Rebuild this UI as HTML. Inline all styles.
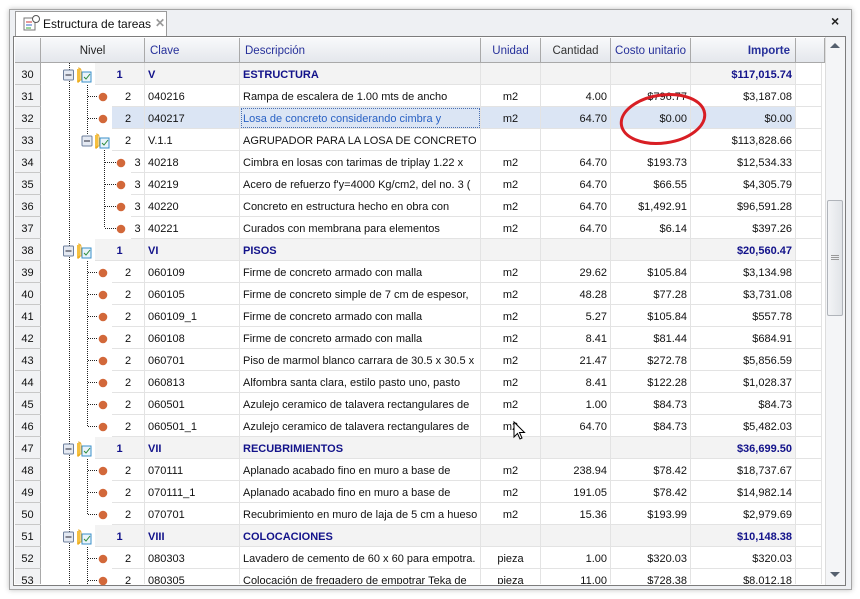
<!DOCTYPE html>
<html><head><meta charset="utf-8"><style>
*{margin:0;padding:0;box-sizing:border-box}
body{width:860px;height:599px;background:#fff;position:relative;overflow:hidden;font-family:"Liberation Sans",Tahoma,sans-serif;font-size:11px;color:#111}
.frame{position:absolute;left:9px;top:9px;width:843px;height:581px;background:#eef0f3;border:1px solid #a5a5a5;box-shadow:0 0 5px rgba(0,0,0,.25)}
.tab{position:absolute;left:15px;top:11px;width:152px;height:26px;background:#fff;border:1px solid #9a9a9a;border-bottom:none;font-size:12px;padding:5px 0 0 27px}
.tabx{position:absolute;left:155px;top:16px;color:#999;font-weight:bold;font-size:12px}
.closex{position:absolute;left:831px;top:13px;font-weight:bold;font-size:14px;color:#222}
.grid{position:absolute;left:13px;top:36px;width:833px;height:550px;background:#fff;border:1px solid #7c7c7c;overflow:hidden}
.hd{position:absolute;top:38px;height:25px;background:linear-gradient(#f8f9fb,#e4e7ec);border-right:1px solid #a9a9a9;border-bottom:1px solid #a9a9a9;color:#26309a;font-size:11.5px;line-height:27px;padding:0 5px;white-space:nowrap;overflow:hidden}
.r{position:absolute;left:15px;width:810px;height:22px}
.r>div{position:absolute;top:0;height:22px;line-height:22px;padding-top:1px;border-right:1px solid #e3e3e3;border-bottom:1px solid #e3e3e3;white-space:nowrap;overflow:hidden;padding-left:3px;padding-right:3px}
.n{left:0;width:26px;background:#f1f2f4;border-right:1px solid #a9a9a9!important;border-bottom:1px solid #c8c8c8!important;text-align:center}
.lv{text-align:center}
.k{left:130px;width:95px}
.d{left:225px;width:241px}
.u{left:466px;width:60px;text-align:center}
.c{left:526px;width:70px;text-align:right}
.p{left:596px;width:80px;text-align:right}
.i{left:676px;width:105px;text-align:right}
.x{left:781px;width:26px}
.g .lv,.g .k,.g .d,.g .u,.g .c,.g .p,.g .i{background:#f3f3f3;color:#12128a;font-weight:bold}
.s .lv,.s .k,.s .d,.s .u,.s .c,.s .p,.s .i{background:#dbe5f4}
.s .d{color:#2a62c4;outline:1px dotted #4a6fb0;outline-offset:-2px}
.l1{left:80px;width:50px}.l2{left:97px;width:33px}.l3{left:116px;width:14px;padding-left:0!important;padding-right:0!important}
.sb{position:absolute;left:825px;top:37px;width:20px;height:548px;background:#f4f5f7;border-left:1px solid #ddd}
.th{position:absolute;left:827px;top:200px;width:16px;height:116px;border:1px solid #b0b4ba;border-radius:2px;background:linear-gradient(90deg,#f3f4f6,#e1e4e8)}
</style></head><body>
<div class="frame"></div>
<div class="tab">Estructura de tareas</div>
<svg style="position:absolute;left:23px;top:14px" width="18" height="18"><rect x="1" y="4" width="11" height="12" fill="#fff" stroke="#777"/><line x1="3" y1="8" x2="9" y2="8" stroke="#c33"/><line x1="3" y1="11" x2="9" y2="11" stroke="#36c"/><line x1="3" y1="14" x2="8" y2="14" stroke="#3a3"/><circle cx="13" cy="5" r="3.5" fill="#fff" stroke="#555"/></svg>
<div class="tabx">✕</div>
<div class="closex">×</div>
<div class="grid"></div>
<div class="hd" style="left:15px;width:26px"></div>
<div class="hd" style="left:41px;width:104px;text-align:center;color:#222">Nivel</div>
<div class="hd" style="left:145px;width:95px">Clave</div>
<div class="hd" style="left:240px;width:241px">Descripción</div>
<div class="hd" style="left:481px;width:60px;text-align:center">Unidad</div>
<div class="hd" style="left:541px;width:70px;text-align:center;color:#333">Cantidad</div>
<div class="hd" style="left:611px;width:80px;text-align:center;padding:0">Costo unitario</div>
<div class="hd" style="left:691px;width:105px;text-align:right;font-weight:bold">Importe</div>
<div class="hd" style="left:796px;width:29px"></div>

<div class="r g" style="top:63px"><div class="n">30</div><div class="lv l1">1</div><div class="k">V</div><div class="d">ESTRUCTURA</div><div class="u"></div><div class="c"></div><div class="p"></div><div class="i">$117,015.74</div><div class="x"></div></div>
<div class="r" style="top:85px"><div class="n">31</div><div class="lv l2">2</div><div class="k">040216</div><div class="d">Rampa de escalera de 1.00 mts de ancho</div><div class="u">m2</div><div class="c">4.00</div><div class="p">$796.77</div><div class="i">$3,187.08</div><div class="x"></div></div>
<div class="r s" style="top:107px"><div class="n">32</div><div class="lv l2">2</div><div class="k">040217</div><div class="d">Losa de concreto considerando cimbra y</div><div class="u">m2</div><div class="c">64.70</div><div class="p">$0.00</div><div class="i">$0.00</div><div class="x"></div></div>
<div class="r" style="top:129px"><div class="n">33</div><div class="lv l2">2</div><div class="k">V.1.1</div><div class="d">AGRUPADOR PARA LA LOSA DE CONCRETO</div><div class="u"></div><div class="c"></div><div class="p"></div><div class="i">$113,828.66</div><div class="x"></div></div>
<div class="r" style="top:151px"><div class="n">34</div><div class="lv l3">3</div><div class="k">40218</div><div class="d">Cimbra en losas con tarimas de triplay 1.22 x</div><div class="u">m2</div><div class="c">64.70</div><div class="p">$193.73</div><div class="i">$12,534.33</div><div class="x"></div></div>
<div class="r" style="top:173px"><div class="n">35</div><div class="lv l3">3</div><div class="k">40219</div><div class="d">Acero de refuerzo f'y=4000 Kg/cm2, del no. 3 (</div><div class="u">m2</div><div class="c">64.70</div><div class="p">$66.55</div><div class="i">$4,305.79</div><div class="x"></div></div>
<div class="r" style="top:195px"><div class="n">36</div><div class="lv l3">3</div><div class="k">40220</div><div class="d">Concreto en estructura hecho en obra con</div><div class="u">m2</div><div class="c">64.70</div><div class="p">$1,492.91</div><div class="i">$96,591.28</div><div class="x"></div></div>
<div class="r" style="top:217px"><div class="n">37</div><div class="lv l3">3</div><div class="k">40221</div><div class="d">Curados con membrana para elementos</div><div class="u">m2</div><div class="c">64.70</div><div class="p">$6.14</div><div class="i">$397.26</div><div class="x"></div></div>
<div class="r g" style="top:239px"><div class="n">38</div><div class="lv l1">1</div><div class="k">VI</div><div class="d">PISOS</div><div class="u"></div><div class="c"></div><div class="p"></div><div class="i">$20,560.47</div><div class="x"></div></div>
<div class="r" style="top:261px"><div class="n">39</div><div class="lv l2">2</div><div class="k">060109</div><div class="d">Firme de concreto armado con malla</div><div class="u">m2</div><div class="c">29.62</div><div class="p">$105.84</div><div class="i">$3,134.98</div><div class="x"></div></div>
<div class="r" style="top:283px"><div class="n">40</div><div class="lv l2">2</div><div class="k">060105</div><div class="d">Firme de concreto simple de 7 cm de espesor,</div><div class="u">m2</div><div class="c">48.28</div><div class="p">$77.28</div><div class="i">$3,731.08</div><div class="x"></div></div>
<div class="r" style="top:305px"><div class="n">41</div><div class="lv l2">2</div><div class="k">060109_1</div><div class="d">Firme de concreto armado con malla</div><div class="u">m2</div><div class="c">5.27</div><div class="p">$105.84</div><div class="i">$557.78</div><div class="x"></div></div>
<div class="r" style="top:327px"><div class="n">42</div><div class="lv l2">2</div><div class="k">060108</div><div class="d">Firme de concreto armado con malla</div><div class="u">m2</div><div class="c">8.41</div><div class="p">$81.44</div><div class="i">$684.91</div><div class="x"></div></div>
<div class="r" style="top:349px"><div class="n">43</div><div class="lv l2">2</div><div class="k">060701</div><div class="d">Piso de marmol blanco carrara de 30.5 x 30.5 x</div><div class="u">m2</div><div class="c">21.47</div><div class="p">$272.78</div><div class="i">$5,856.59</div><div class="x"></div></div>
<div class="r" style="top:371px"><div class="n">44</div><div class="lv l2">2</div><div class="k">060813</div><div class="d">Alfombra santa clara, estilo pasto uno, pasto</div><div class="u">m2</div><div class="c">8.41</div><div class="p">$122.28</div><div class="i">$1,028.37</div><div class="x"></div></div>
<div class="r" style="top:393px"><div class="n">45</div><div class="lv l2">2</div><div class="k">060501</div><div class="d">Azulejo ceramico de talavera rectangulares de</div><div class="u">m2</div><div class="c">1.00</div><div class="p">$84.73</div><div class="i">$84.73</div><div class="x"></div></div>
<div class="r" style="top:415px"><div class="n">46</div><div class="lv l2">2</div><div class="k">060501_1</div><div class="d">Azulejo ceramico de talavera rectangulares de</div><div class="u">m2</div><div class="c">64.70</div><div class="p">$84.73</div><div class="i">$5,482.03</div><div class="x"></div></div>
<div class="r g" style="top:437px"><div class="n">47</div><div class="lv l1">1</div><div class="k">VII</div><div class="d">RECUBRIMIENTOS</div><div class="u"></div><div class="c"></div><div class="p"></div><div class="i">$36,699.50</div><div class="x"></div></div>
<div class="r" style="top:459px"><div class="n">48</div><div class="lv l2">2</div><div class="k">070111</div><div class="d">Aplanado acabado fino en muro a base de</div><div class="u">m2</div><div class="c">238.94</div><div class="p">$78.42</div><div class="i">$18,737.67</div><div class="x"></div></div>
<div class="r" style="top:481px"><div class="n">49</div><div class="lv l2">2</div><div class="k">070111_1</div><div class="d">Aplanado acabado fino en muro a base de</div><div class="u">m2</div><div class="c">191.05</div><div class="p">$78.42</div><div class="i">$14,982.14</div><div class="x"></div></div>
<div class="r" style="top:503px"><div class="n">50</div><div class="lv l2">2</div><div class="k">070701</div><div class="d">Recubrimiento en muro de laja de 5 cm a hueso</div><div class="u">m2</div><div class="c">15.36</div><div class="p">$193.99</div><div class="i">$2,979.69</div><div class="x"></div></div>
<div class="r g" style="top:525px"><div class="n">51</div><div class="lv l1">1</div><div class="k">VIII</div><div class="d">COLOCACIONES</div><div class="u"></div><div class="c"></div><div class="p"></div><div class="i">$10,148.38</div><div class="x"></div></div>
<div class="r" style="top:547px"><div class="n">52</div><div class="lv l2">2</div><div class="k">080303</div><div class="d">Lavadero de cemento de 60 x 60 para empotra.</div><div class="u">pieza</div><div class="c">1.00</div><div class="p">$320.03</div><div class="i">$320.03</div><div class="x"></div></div>
<div class="r" style="top:569px;height:15px;overflow:hidden"><div class="n">53</div><div class="lv l2">2</div><div class="k">080305</div><div class="d">Colocación de fregadero de empotrar Teka de</div><div class="u">pieza</div><div class="c">11.00</div><div class="p">$728.38</div><div class="i">$8,012.18</div><div class="x"></div></div>

<svg style="position:absolute;left:0;top:0" width="860" height="599">
<defs>
<g id="ex"><rect x="-5" y="-5" width="10" height="10" rx="1" fill="#e4e9f2" stroke="#6d7f9c"/><line x1="-3" y1="0" x2="3" y2="0" stroke="#223"/></g>
<g id="ic"><path d="M0,-6 h3 v13 h-3 z" fill="#f5c040"/><path d="M1,-7 q3,0 3,3 v9 q-3,0 -3,3" fill="none" stroke="#e8a820"/><rect x="5" y="-3" width="9" height="10" fill="#eaf4fb" stroke="#3a8fc8"/><path d="M7,2 l2,2 l4,-5" stroke="#2a8a3a" fill="none"/></g>
</defs>
<g stroke="#222" stroke-dasharray="1,1" fill="none">
<line x1="69.5" y1="63" x2="69.5" y2="584"/>
<line x1="87.5" y1="85" x2="87.5" y2="135"/>
<line x1="88" y1="96.5" x2="98" y2="96.5"/><line x1="88" y1="118.5" x2="98" y2="118.5"/>
<line x1="104.5" y1="150" x2="104.5" y2="228"/>
<line x1="105" y1="162.5" x2="116" y2="162.5"/><line x1="105" y1="184.5" x2="116" y2="184.5"/><line x1="105" y1="206.5" x2="116" y2="206.5"/><line x1="105" y1="228.5" x2="116" y2="228.5"/>
<line x1="87.5" y1="261" x2="87.5" y2="426"/>
<line x1="88" y1="272.5" x2="98" y2="272.5"/><line x1="88" y1="294.5" x2="98" y2="294.5"/><line x1="88" y1="316.5" x2="98" y2="316.5"/><line x1="88" y1="338.5" x2="98" y2="338.5"/><line x1="88" y1="360.5" x2="98" y2="360.5"/><line x1="88" y1="382.5" x2="98" y2="382.5"/><line x1="88" y1="404.5" x2="98" y2="404.5"/><line x1="88" y1="426.5" x2="98" y2="426.5"/>
<line x1="87.5" y1="459" x2="87.5" y2="514"/>
<line x1="88" y1="470.5" x2="98" y2="470.5"/><line x1="88" y1="492.5" x2="98" y2="492.5"/><line x1="88" y1="514.5" x2="98" y2="514.5"/>
<line x1="87.5" y1="547" x2="87.5" y2="584"/>
<line x1="88" y1="558.5" x2="98" y2="558.5"/><line x1="88" y1="580.5" x2="98" y2="580.5"/>
</g>
<use href="#ex" x="68.5" y="75"/><use href="#ic" x="77" y="75"/>
<use href="#ex" x="68.5" y="251"/><use href="#ic" x="77" y="251"/>
<use href="#ex" x="68.5" y="449"/><use href="#ic" x="77" y="449"/>
<use href="#ex" x="68.5" y="537"/><use href="#ic" x="77" y="537"/>
<use href="#ex" x="87" y="141"/><use href="#ic" x="95" y="141"/>
<g fill="#d2683a">
<circle cx="103" cy="97" r="4.3"/><circle cx="103" cy="119" r="4.3"/>
<circle cx="121" cy="163" r="4.3"/><circle cx="121" cy="185" r="4.3"/><circle cx="121" cy="207" r="4.3"/><circle cx="121" cy="229" r="4.3"/>
<circle cx="103" cy="273" r="4.3"/><circle cx="103" cy="295" r="4.3"/><circle cx="103" cy="317" r="4.3"/><circle cx="103" cy="339" r="4.3"/><circle cx="103" cy="361" r="4.3"/><circle cx="103" cy="383" r="4.3"/><circle cx="103" cy="405" r="4.3"/><circle cx="103" cy="427" r="4.3"/>
<circle cx="103" cy="471" r="4.3"/><circle cx="103" cy="493" r="4.3"/><circle cx="103" cy="515" r="4.3"/>
<circle cx="103" cy="559" r="4.3"/><circle cx="103" cy="581" r="4.3"/>
</g>
<ellipse cx="663" cy="119" rx="42" ry="24" fill="none" stroke="#d81e24" stroke-width="3" transform="rotate(-8 663 119)"/>
<path d="M514,422 v15 l3.5,-3.5 l2.5,5.5 l2,-1 l-2.5,-5.5 h5 z" fill="#fff" stroke="#000" stroke-width="1"/>
</svg>
<div class="sb"></div>
<svg style="position:absolute;left:829px;top:40px" width="12" height="10"><path d="M1,8 L6,3 L11,8 z" fill="#55606e"/></svg>
<svg style="position:absolute;left:829px;top:570px" width="12" height="10"><path d="M1,2 L6,7 L11,2 z" fill="#55606e"/></svg>
<div class="th"></div>
<svg style="position:absolute;left:831px;top:254px" width="8" height="8"><g stroke="#999"><line x1="0" y1="1.5" x2="8" y2="1.5"/><line x1="0" y1="3.5" x2="8" y2="3.5"/><line x1="0" y1="5.5" x2="8" y2="5.5"/></g></svg>
</body></html>
